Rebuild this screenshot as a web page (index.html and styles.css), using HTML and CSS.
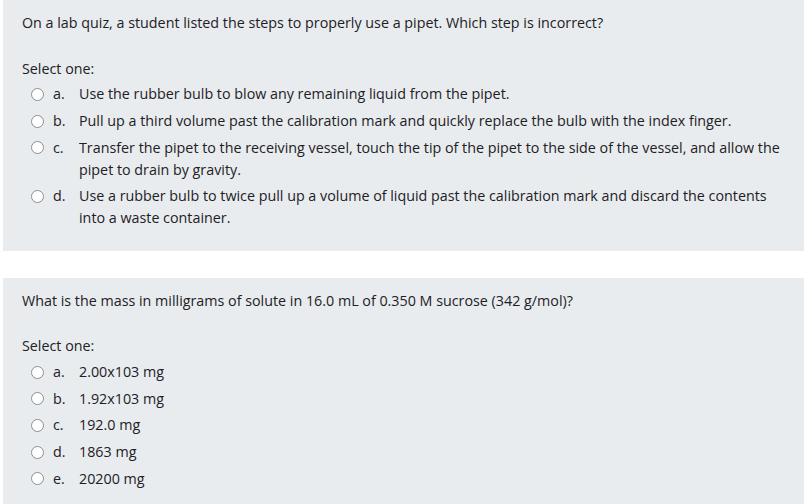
FILE: index.html
```html
<!DOCTYPE html>
<html>
<head>
<meta charset="utf-8">
<link rel="stylesheet" href="styles.css">
</head>
<body>
<div class="que">
  <div class="qtext">On a lab quiz, a student listed the steps to properly use a pipet. Which step is incorrect?</div>
  <div class="prompt">Select one:</div>
  <div class="answer">
    <div class="opt"><span class="radio"></span><span class="letter">a.</span><span class="txt">Use the rubber bulb to blow any remaining liquid from the pipet.</span></div>
    <div class="opt"><span class="radio"></span><span class="letter">b.</span><span class="txt">Pull up a third volume past the calibration mark and quickly replace the bulb with the index finger.</span></div>
    <div class="opt"><span class="radio"></span><span class="letter">c.</span><span class="txt">Transfer the pipet to the receiving vessel, touch the tip of the pipet to the side of the vessel, and allow the pipet to drain by gravity.</span></div>
    <div class="opt"><span class="radio"></span><span class="letter">d.</span><span class="txt">Use a rubber bulb to twice pull up a volume of liquid past the calibration mark and discard the contents into a waste container.</span></div>
  </div>
</div>
<div class="que">
  <div class="qtext">What is the mass in milligrams of solute in 16.0 mL of 0.350 M sucrose (342 g/mol)?</div>
  <div class="prompt">Select one:</div>
  <div class="answer">
    <div class="opt"><span class="radio"></span><span class="letter">a.</span><span class="txt">2.00x103 mg</span></div>
    <div class="opt"><span class="radio"></span><span class="letter">b.</span><span class="txt">1.92x103 mg</span></div>
    <div class="opt"><span class="radio"></span><span class="letter">c.</span><span class="txt">192.0 mg</span></div>
    <div class="opt"><span class="radio"></span><span class="letter">d.</span><span class="txt">1863 mg</span></div>
    <div class="opt"><span class="radio"></span><span class="letter">e.</span><span class="txt">20200 mg</span></div>
  </div>
</div>
</body>
</html>
```
FILE: styles.css
```css
html, body {
  margin: 0;
  padding: 0;
  background: #ffffff;
}
body {
  font-family: "Open Sans", "Noto Sans", sans-serif;
  font-size: 14.3px;
  line-height: 22px;
  color: #1d2125;
  overflow: hidden;
}
.que {
  margin-left: 3px;
  background: #e9ecef;
  padding: 12px 19px 19px 19px;
  margin-bottom: 27px;
}
.prompt {
  margin-top: 23.5px;
  margin-bottom: 1.5px;
}
.answer {
  padding-left: 9px;
}
.opt {
  display: flex;
  align-items: flex-start;
  padding: 2.35px 0;
  max-width: 757px;
}
.radio {
  flex: none;
  width: 11px;
  height: 11px;
  border: 1px solid #8c8f93;
  border-radius: 50%;
  background: #fff;
  margin-top: 4.5px;
  margin-right: 9px;
}
.letter {
  flex: none;
  width: 26px;
}
.txt {
  flex: 1;
}
```
